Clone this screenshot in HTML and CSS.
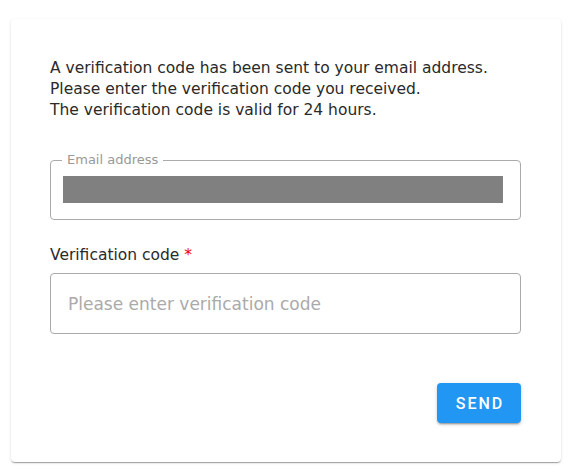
FILE: index.html
```html
<!DOCTYPE html>
<html lang="en">
<head>
<meta charset="utf-8">
<title>Verification</title>
<link rel="stylesheet" href="styles.css">
</head>
<body>
<div class="card">
  <p class="intro">A verification code has been sent to your email address.<br>Please enter the verification code you received.<br>The verification code is valid for 24 hours.</p>
  <div class="email-field">
    <span class="email-legend">Email address</span>
    <div class="masked"></div>
  </div>
  <label class="code-label" for="code">Verification code <span class="req">*</span></label>
  <input id="code" class="code-input" type="text" placeholder="Please enter verification code">
  <div class="actions">
    <button class="send" type="button">SEND</button>
  </div>
</div>
</body>
</html>
```

FILE: styles.css
```css
html, body {
  margin: 0;
  padding: 0;
  background: #ffffff;
}
body {
  padding: 19px 13px 12px 11px;
  font-family: "DejaVu Sans", Verdana, sans-serif;
  color: #2a2a2a;
}
.card {
  width: 550px;
  box-sizing: border-box;
  height: 443px;
  background: #ffffff;
  border-radius: 4px;
  box-shadow: 0 2px 1px -1px rgba(0,0,0,0.2), 0 1px 1px 0 rgba(0,0,0,0.14), 0 1px 3px 0 rgba(0,0,0,0.12);
  padding: 39px 40px 0 39px;
  display: flex;
  flex-direction: column;
}
.intro {
  margin: 0;
  font-size: 15.5px;
  line-height: 21px;
  color: #2a2a2a;
}
.email-field {
  position: relative;
  margin-top: 39px;
  height: 60px;
  box-sizing: border-box;
  padding: 15px 17px 0 12px;
  border: 1px solid #aaa;
  border-radius: 4px;
}
.email-legend {
  position: absolute;
  left: 11px;
  top: -9px;
  padding: 0 5px;
  background: #ffffff;
  font-size: 13px;
  line-height: 16px;
  color: #999;
}
.masked {
  height: 27px;
  background: #808080;
}
.code-label {
  margin-top: 26px;
  font-size: 15.5px;
  line-height: 18px;
  color: #2a2a2a;
}
.req {
  color: #e00;
}
.code-input {
  margin-top: 9px;
  height: 61px;
  box-sizing: border-box;
  border: 1px solid #aaa;
  border-radius: 4px;
  padding: 0 17px;
  font-family: "DejaVu Sans", Verdana, sans-serif;
  font-size: 17px;
  background: transparent;
  outline: none;
}
.code-input::placeholder {
  color: #aaa;
}
.actions {
  display: flex;
  justify-content: flex-end;
  margin-top: 49px;
}
.send {
  width: 84px;
  height: 40px;
  padding: 0 0 0 2px;
  border: none;
  border-radius: 4px;
  background: #2196f3;
  color: #fff;
  font-family: Roboto, "Liberation Sans", sans-serif;
  font-size: 16px;
  font-weight: 500;
  letter-spacing: 2px;
  box-shadow: 0 3px 1px -2px rgba(0,0,0,0.2), 0 2px 2px 0 rgba(0,0,0,0.14), 0 1px 5px 0 rgba(0,0,0,0.12);
  cursor: pointer;
}
```
